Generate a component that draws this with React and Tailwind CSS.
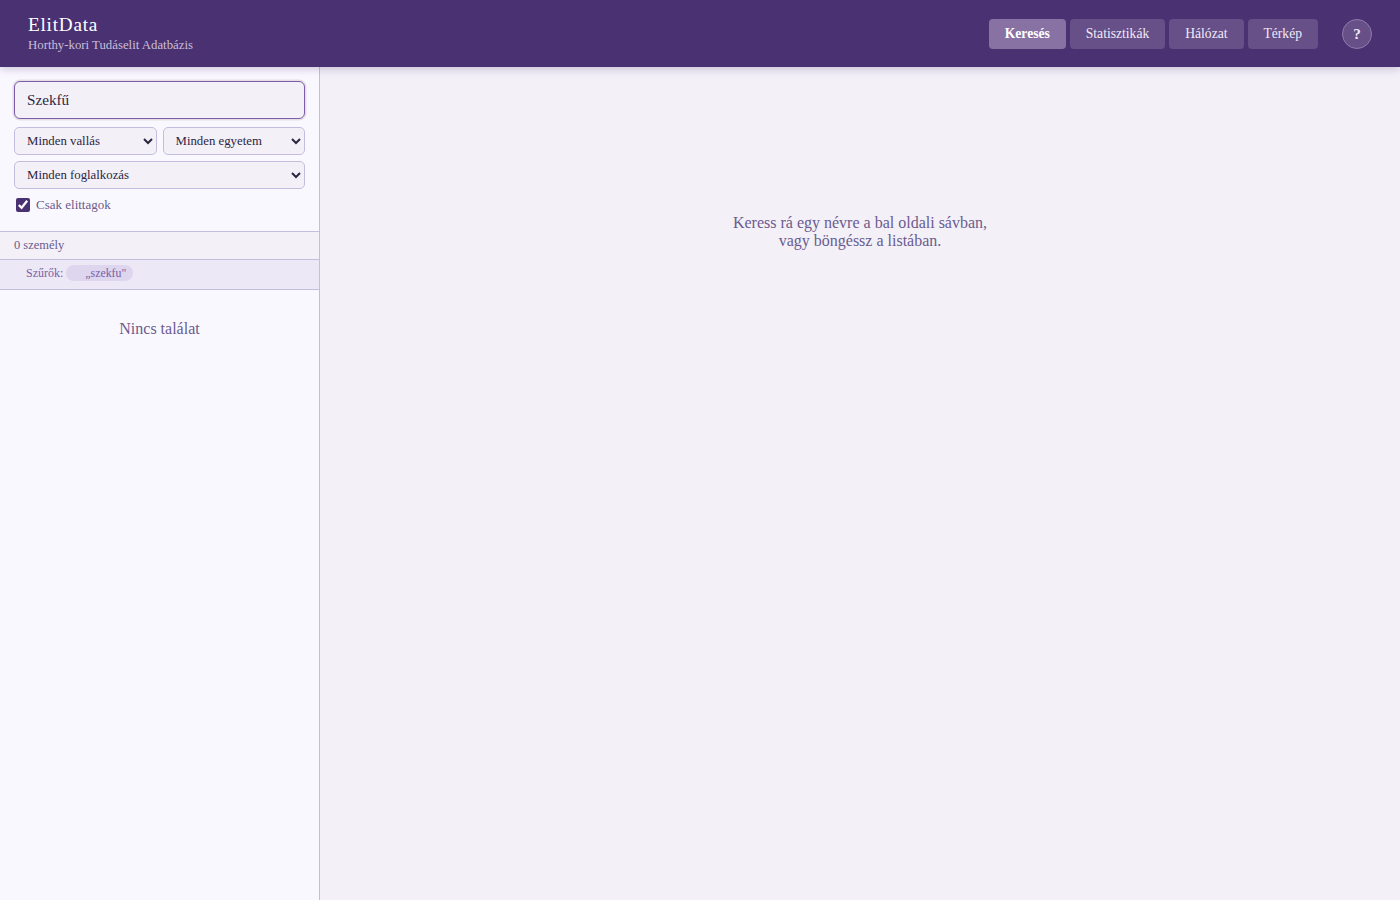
import React from 'react';

const tabs = ['Keresés', 'Statisztikák', 'Hálózat', 'Térkép'];

const selectClass =
  "h-[28px] rounded-[5px] border border-[#c5bde0] bg-[#f3f0f8] pl-2 pr-0 text-[12.8px] text-[#2d2640] font-['Liberation_Serif',serif] outline-none";

const App = () => {
  return (
    <div className="flex h-[900px] flex-col overflow-hidden bg-[#f3f0f8] font-['Liberation_Serif',serif]">
      <header className="z-10 flex h-[67px] shrink-0 items-center justify-between bg-[#4a3172] pl-7 pr-7 shadow-[0_2px_8px_rgba(74,49,114,0.25)]">
        <div className="pt-[1px]">
          <div className="mb-[3px] text-[19.2px] leading-[20px] tracking-[0.77px] text-white">ElitData</div>
          <div className="text-[12.8px] leading-[15px] text-[#c9bfd9]">Horthy-kori Tudáselit Adatbázis</div>
        </div>
        <div className="flex items-center">
          <nav className="flex gap-1">
            {tabs.map((tab, i) => (
              <button
                key={tab}
                className={
                  i === 0
                    ? 'h-[30px] rounded-[4px] bg-[#8872a4] px-4 pt-[1px] text-[13.6px] font-bold text-white'
                    : 'h-[30px] rounded-[4px] bg-[#674f88] px-4 pt-[1px] text-[13.6px] text-[#f0ebf8]'
                }
              >
                {tab}
              </button>
            ))}
          </nav>
          <button className="ml-6 h-[30px] w-[30px] rounded-full border border-[#8f7cab] bg-[#674f88] pt-[1px] text-[15.2px] font-bold text-[#f0ebf8]">
            ?
          </button>
        </div>
      </header>

      <div className="flex min-h-0 flex-1">
        <aside className="flex w-[320px] shrink-0 flex-col border-r border-[#c5bde0] bg-[#faf8ff]">
          <div className="flex h-[164px] flex-col px-[14px] pt-[14px]">
            <input
              defaultValue="Szekfű"
              className="h-[38px] w-full rounded-[6px] border border-[#7b5ea7] bg-[#f3f0f8] px-3 text-[15.2px] text-[#2d2640] shadow-[0_0_0_1.5px_#e4dfe4] outline-none"
            />
            <div className="mt-2 flex gap-[6px]">
              <select className={`${selectClass} min-w-0 flex-1`}>
                <option>Minden vallás</option>
              </select>
              <select className={`${selectClass} min-w-0 flex-1`}>
                <option>Minden egyetem</option>
              </select>
            </div>
            <select className={`${selectClass} mt-[6px] w-full`}>
              <option>Minden foglalkozás</option>
            </select>
            <label className="mt-2 flex items-center gap-[6px] pl-[2px] text-[13px] leading-[16px] text-[#6b5b8e]">
              <input type="checkbox" defaultChecked className="m-0 h-[14px] w-[14px] accent-[#4a3172]" />
              Csak elittagok
            </label>
          </div>
          <div className="flex h-[29px] items-center border-y border-[#c5bde0] bg-[#f3f0f8] px-[14px] pb-[1px] text-[12.48px] text-[#6b5b8e]">
            0 személy
          </div>
          <div className="flex h-[30px] items-center gap-[3px] border-b border-[#c5bde0] bg-[#ece8f6] pb-[3px] pl-[26px] text-[12px] text-[#7b5ea7]">
            Szűrők:
            <span className="rounded-full bg-[#ddd6ee] pl-[19px] pr-[7px] text-[11.84px] leading-[16px]">„szekfu"</span>
          </div>
          <div className="pt-[30px] text-center text-[16px] leading-[18px] text-[#6b5b8e]">Nincs találat</div>
        </aside>

        <main className="flex-1 pt-[147px] text-center text-[16px] leading-[18px] text-[#6b5b8e]">
          Keress rá egy névre a bal oldali sávban,
          <br />
          vagy böngéssz a listában.
        </main>
      </div>
    </div>
  );
};

export default App;
